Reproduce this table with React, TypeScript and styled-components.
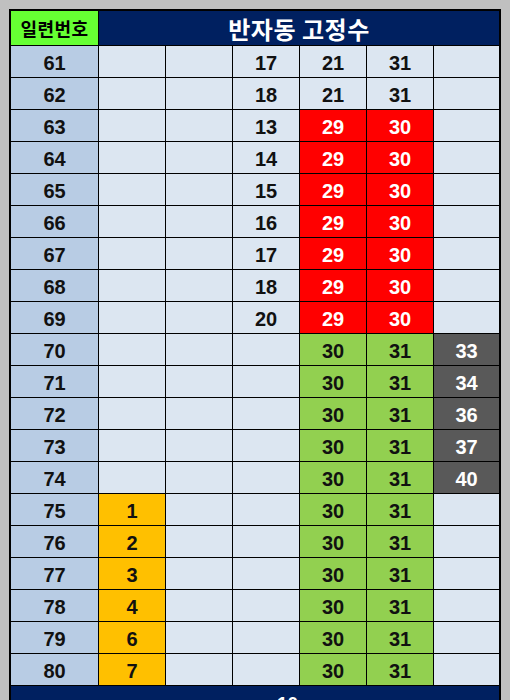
import React from "react";
import styled, { createGlobalStyle } from "styled-components";

const Global = createGlobalStyle`
  html, body { margin: 0; padding: 0; background: #c0c0c0; }
  body { font-family: "Liberation Sans", "Noto Sans CJK KR", sans-serif; overflow: hidden; }
`;

const Page = styled.div`
  padding: 9px 0 0 9px;
  height: 691px;
  overflow: hidden;
`;

const Sheet = styled.div`
  width: 488px;
  border: 2px solid #000;
  border-bottom: none;
  background: #000;
  display: grid;
  grid-template-columns: 87px 66px 66px 66px 66px 66px 65px;
  grid-auto-rows: 31px;
  grid-template-rows: 34px;
  gap: 1px;
`;

const HeadLabel = styled.div`
  background: #66ff33;
  display: flex;
  align-items: center;
  justify-content: center;
  font-family: "Noto Sans CJK KR", sans-serif;
  font-weight: 700;
  font-size: 18px;
  color: #000;
  letter-spacing: 0.5px;
`;

const Title = styled.div`
  grid-column: 2 / span 6;
  background: #002060;
  display: flex;
  align-items: center;
  justify-content: center;
  font-family: "Noto Sans CJK KR", sans-serif;
  font-weight: 700;
  font-size: 24px;
  color: #fff;
  letter-spacing: 0.5px;
`;

type Tone = "plain" | "index" | "red" | "green" | "gray" | "orange";

const bg: Record<Tone, string> = {
  plain: "#dce6f1",
  index: "#b8cce4",
  red: "#ff0000",
  green: "#92d050",
  gray: "#595959",
  orange: "#ffc000",
};

const Cell = styled.div<{ $tone: Tone }>`
  background: ${(p) => bg[p.$tone]};
  color: ${(p) => (p.$tone === "red" || p.$tone === "gray" ? "#fff" : "#111")};
  display: flex;
  align-items: center;
  justify-content: center;
  font-family: "Liberation Sans", "Noto Sans CJK KR", sans-serif;
  font-weight: 700;
  font-size: 20px;
  padding-top: 3px;
  box-sizing: border-box;
`;

const Footer = styled.div`
  grid-column: 1 / span 7;
  background: #002060;
  color: #fff;
  font-family: "Liberation Sans", sans-serif;
  font-weight: 700;
  font-size: 19px;
  padding: 7px 0 0 266px;
  height: 40px;
  box-sizing: border-box;
`;

type C = { v?: string | number; t?: Tone };

const rows: C[][] = [];
const c4a = [17, 18, 13, 14, 15, 16, 17, 18, 20];
const c7 = [33, 34, 36, 37, 40];
const c2 = [1, 2, 3, 4, 6, 7];
for (let i = 0; i < 20; i++) {
  const n = 61 + i;
  const r: C[] = [{ v: n, t: "index" }, {}, {}, {}, {}, {}, {}];
  if (i < 9) r[3] = { v: c4a[i] };
  if (i < 2) {
    r[4] = { v: 21 };
    r[5] = { v: 31 };
  } else if (i < 9) {
    r[4] = { v: 29, t: "red" };
    r[5] = { v: 30, t: "red" };
  } else {
    r[4] = { v: 30, t: "green" };
    r[5] = { v: 31, t: "green" };
  }
  if (i >= 9 && i < 14) r[6] = { v: c7[i - 9], t: "gray" };
  if (i >= 14) r[1] = { v: c2[i - 14], t: "orange" };
  rows.push(r);
}

export default function App() {
  return (
    <>
      <Global />
      <Page>
        <Sheet>
          <HeadLabel>일련번호</HeadLabel>
          <Title>반자동 고정수</Title>
          {rows.map((r, ri) =>
            r.map((c, ci) => (
              <Cell key={`${ri}-${ci}`} $tone={c.t ?? "plain"}>
                {c.v ?? ""}
              </Cell>
            ))
          )}
          <Footer>10</Footer>
        </Sheet>
      </Page>
    </>
  );
}
